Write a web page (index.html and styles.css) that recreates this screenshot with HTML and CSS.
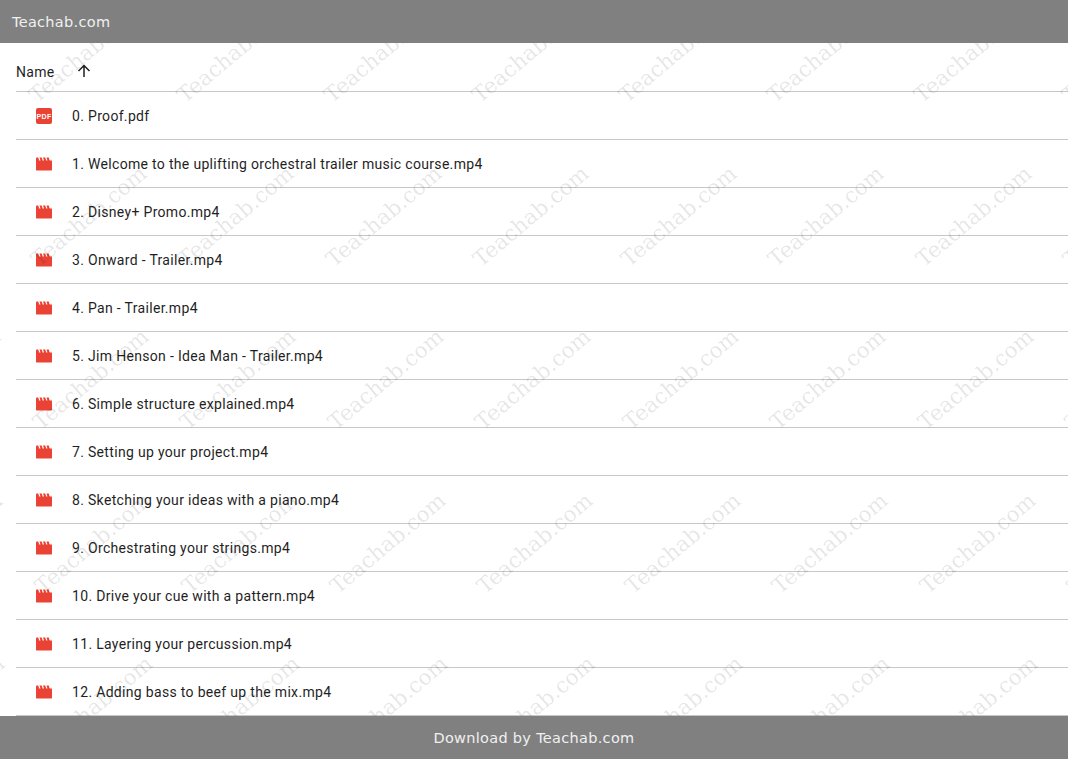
FILE: index.html
```html
<!DOCTYPE html>
<html lang="en">

<head>
    <meta charset="UTF-8">
    <meta name="viewport" content="width=device-width, initial-scale=1.0">
    <title>Teachab.com</title>
    <link rel="stylesheet" href="styles.css">
</head>

<body>
    <svg class="sprites" width="0" height="0" aria-hidden="true">
        <symbol id="icon-video" viewBox="0 0 16 16">
            <path fill="#ea4335" d="M0 2.500C0 1.900.4 1.500 1 1.500h1.200l1 3h1.300l-1-3h2.200l1 3h1.300l-1-3h2.200l1 3h1.300l-1-3h2.200l1 3H16v9c0 .6-.4 1-1 1H1c-.6 0-1-.4-1-1z" />
        </symbol>
    </svg>

    <!-- top bar -->
    <div class="topbar">Teachab.com</div>

    <div class="listing">
        <div class="list-head">
            <span>Name</span>
            <svg class="sort-arrow" viewBox="0 0 16 16" width="16" height="16">
                <path d="M8 14V2.500M2.500 8 8 2.500 13.500 8" fill="none" stroke="#1f1f1f" stroke-width="1.500" />
            </svg>
        </div>
        <div class="file-row">
            <svg class="file-icon" viewBox="0 0 16 16">
                <rect width="16" height="16" rx="2" fill="#ea4335" />
                <text class="pdf-label" x="8" y="10.600" text-anchor="middle">PDF</text>
            </svg>
            <span>0. Proof.pdf</span>
        </div>
        <div class="file-row"><svg class="file-icon"><use href="#icon-video" /></svg><span>1. Welcome to the uplifting orchestral trailer music course.mp4</span></div>
        <div class="file-row"><svg class="file-icon"><use href="#icon-video" /></svg><span>2. Disney+ Promo.mp4</span></div>
        <div class="file-row"><svg class="file-icon"><use href="#icon-video" /></svg><span>3. Onward - Trailer.mp4</span></div>
        <div class="file-row"><svg class="file-icon"><use href="#icon-video" /></svg><span>4. Pan - Trailer.mp4</span></div>
        <div class="file-row"><svg class="file-icon"><use href="#icon-video" /></svg><span>5. Jim Henson - Idea Man - Trailer.mp4</span></div>
        <div class="file-row"><svg class="file-icon"><use href="#icon-video" /></svg><span>6. Simple structure explained.mp4</span></div>
        <div class="file-row"><svg class="file-icon"><use href="#icon-video" /></svg><span>7. Setting up your project.mp4</span></div>
        <div class="file-row"><svg class="file-icon"><use href="#icon-video" /></svg><span>8. Sketching your ideas with a piano.mp4</span></div>
        <div class="file-row"><svg class="file-icon"><use href="#icon-video" /></svg><span>9. Orchestrating your strings.mp4</span></div>
        <div class="file-row"><svg class="file-icon"><use href="#icon-video" /></svg><span>10. Drive your cue with a pattern.mp4</span></div>
        <div class="file-row"><svg class="file-icon"><use href="#icon-video" /></svg><span>11. Layering your percussion.mp4</span></div>
        <div class="file-row"><svg class="file-icon"><use href="#icon-video" /></svg><span>12. Adding bass to beef up the mix.mp4</span></div>
    </div>

    <!-- watermark layer, filled by the script below -->
    <div class="watermarks" id="watermarks"></div>

    <!-- bottom bar -->
    <div class="bottombar">Download by Teachab.com</div>

    <script>
        var layer = document.getElementById('watermarks');
        for (var row = 0; row < 5; row++) {
            for (var col = -1; col < 8; col++) {
                var mark = document.createElement('span');
                mark.className = 'mark';
                mark.textContent = 'Teachab.com';
                mark.style.left = (39 + col * 147.5 + row * 1.9) + 'px';
                mark.style.top = (85 + row * 163.5) + 'px';
                layer.appendChild(mark);
            }
        }
    </script>
</body>

</html>
```

FILE: styles.css
```css
html,
body {
    height: 100%;
    margin: 0;
    overflow: hidden;
    background-color: #fff;
}

body {
    display: flex;
    flex-direction: column;
    position: relative;
    font-family: Roboto, Arial, sans-serif;
}

.sprites {
    position: absolute;
}

.topbar,
.bottombar {
    height: 43px;
    flex: none;
    display: flex;
    align-items: center;
    background-color: #808080;
    color: #f0f0f0;
    font-family: "DejaVu Sans", sans-serif;
    font-size: 14.500px;
    letter-spacing: 0.3px;
    position: relative;
    z-index: 2;
}

.topbar {
    padding-left: 12px;
}

.bottombar {
    justify-content: center;
}

.listing {
    flex: 1;
    min-height: 0;
    overflow: hidden;
    padding-left: 16px;
    font-size: 14px;
    letter-spacing: 0.32px;
    color: #1f1f1f;
}

.list-head {
    height: 49px;
    box-sizing: border-box;
    padding-top: 9px;
    display: flex;
    align-items: center;
    gap: 21px;
    border-bottom: 1px solid #c7c7c7;
}

.sort-arrow {
    flex: none;
    margin-bottom: 2px;
}

.file-row {
    height: 48px;
    box-sizing: border-box;
    display: flex;
    align-items: center;
    gap: 20px;
    padding-left: 20px;
    border-bottom: 1px solid #c7c7c7;
}

.file-icon {
    width: 16px;
    height: 16px;
    flex: none;
}

.pdf-label {
    font-family: "Liberation Sans", Arial, sans-serif;
    font-size: 7px;
    font-weight: bold;
    fill: #fff;
}

.watermarks {
    position: absolute;
    inset: 0;
    overflow: hidden;
    pointer-events: none;
    z-index: 1;
}

.mark {
    position: absolute;
    font-family: "DejaVu Serif", serif;
    font-size: 21.500px;
    line-height: 1;
    color: rgba(0, 0, 0, 0.11);
    white-space: nowrap;
    transform-origin: 0 100%;
    transform: rotate(-40deg);
}
```
